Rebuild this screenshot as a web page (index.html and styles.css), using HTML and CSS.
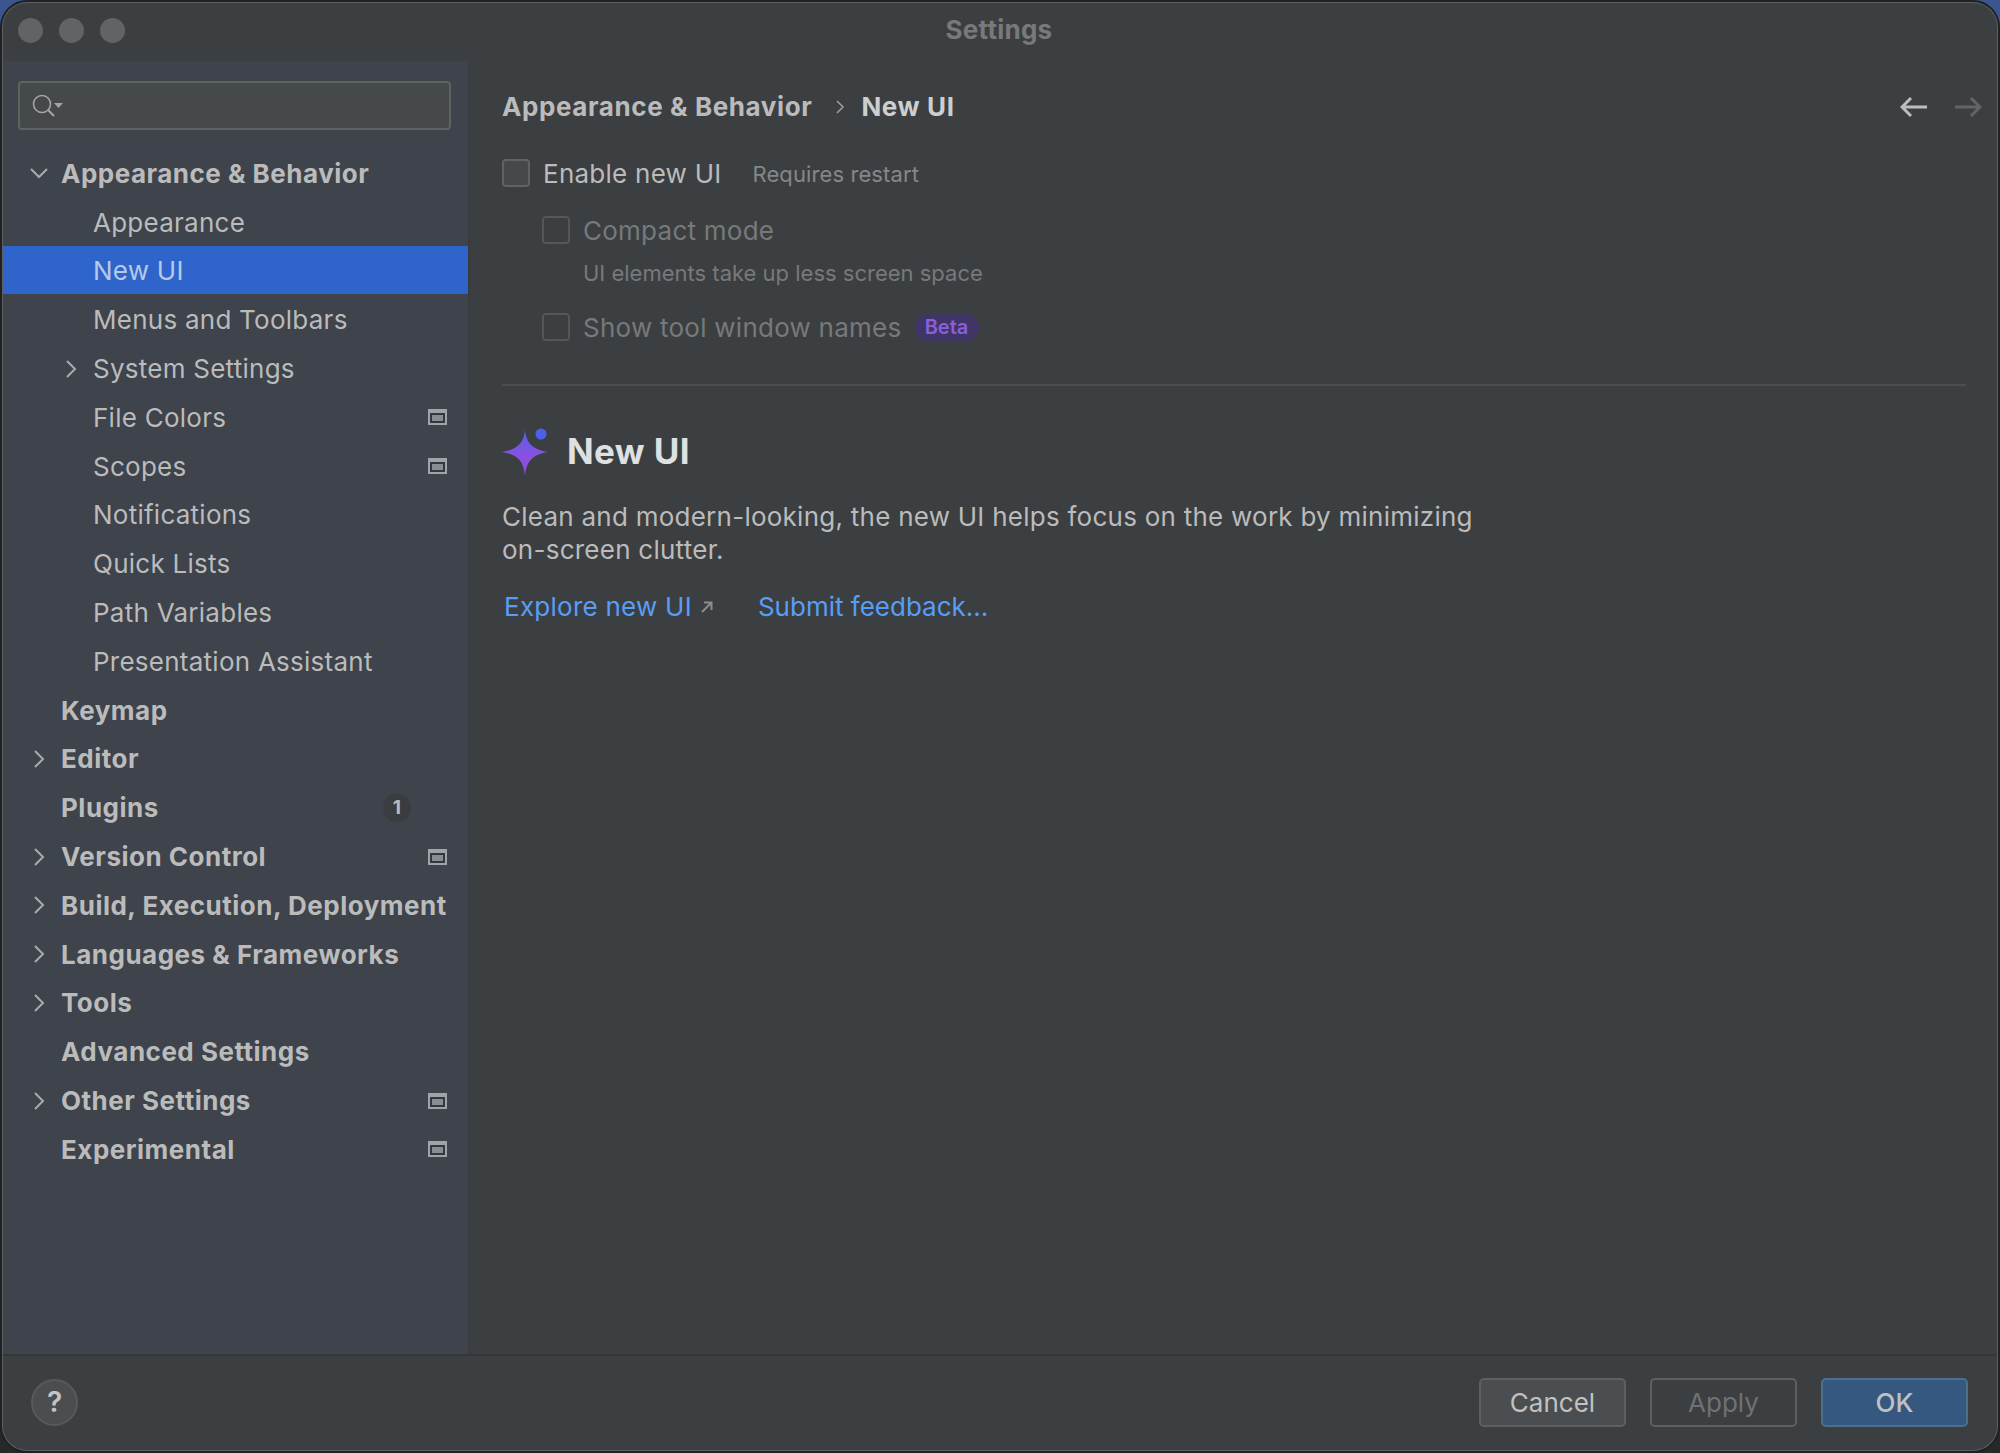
FILE: index.html
```html
<!DOCTYPE html>
<html lang="en">
<head>
  <meta charset="UTF-8">
  <meta name="viewport" content="width=device-width, initial-scale=1.0">
  <title>Settings</title>
  <link rel="stylesheet" href="styles.css">
</head>
<body>
  <div class="window">
    <header class="titlebar">
      <div class="lights">
        <span class="light"></span>
        <span class="light"></span>
        <span class="light"></span>
      </div>
      <div class="title">Settings</div>
    </header>

    <div class="body">
      <aside class="sidebar">
        <div class="search">
          <svg class="search-icon" width="36" height="28" viewBox="0 0 36 28">
            <circle cx="13" cy="12" r="8.5" fill="none" stroke="#a3a5a7" stroke-width="1.6"/>
            <path d="M19 18l6 6" stroke="#a3a5a7" stroke-width="2" fill="none"/>
            <path d="M25 11h9l-4.500 5z" fill="#a3a5a7"/>
          </svg>
        </div>

        <ul class="tree">
          <li class="row top"><svg class="chev" width="32" height="20" viewBox="0 0 32 20"><path d="M2 6l8 8 8-8" /></svg><span>Appearance &amp; Behavior</span></li>
          <li class="row sub"><span class="chev"></span><span>Appearance</span></li>
          <li class="row sub selected"><span class="chev"></span><span>New UI</span></li>
          <li class="row sub"><span class="chev"></span><span>Menus and Toolbars</span></li>
          <li class="row sub"><svg class="chev" width="32" height="20" viewBox="0 0 32 20"><path d="M6 2l8 8-8 8" /></svg><span>System Settings</span></li>
          <li class="row sub"><span class="chev"></span><span>File Colors</span><span class="proj"></span></li>
          <li class="row sub"><span class="chev"></span><span>Scopes</span><span class="proj"></span></li>
          <li class="row sub"><span class="chev"></span><span>Notifications</span></li>
          <li class="row sub"><span class="chev"></span><span>Quick Lists</span></li>
          <li class="row sub"><span class="chev"></span><span>Path Variables</span></li>
          <li class="row sub"><span class="chev"></span><span>Presentation Assistant</span></li>
          <li class="row top"><span class="chev"></span><span>Keymap</span></li>
          <li class="row top"><svg class="chev" width="32" height="20" viewBox="0 0 32 20"><path d="M6 2l8 8-8 8" /></svg><span>Editor</span></li>
          <li class="row top"><span class="chev"></span><span>Plugins</span><span class="count">1</span></li>
          <li class="row top"><svg class="chev" width="32" height="20" viewBox="0 0 32 20"><path d="M6 2l8 8-8 8" /></svg><span>Version Control</span><span class="proj"></span></li>
          <li class="row top"><svg class="chev" width="32" height="20" viewBox="0 0 32 20"><path d="M6 2l8 8-8 8" /></svg><span>Build, Execution, Deployment</span></li>
          <li class="row top"><svg class="chev" width="32" height="20" viewBox="0 0 32 20"><path d="M6 2l8 8-8 8" /></svg><span>Languages &amp; Frameworks</span></li>
          <li class="row top"><svg class="chev" width="32" height="20" viewBox="0 0 32 20"><path d="M6 2l8 8-8 8" /></svg><span>Tools</span></li>
          <li class="row top"><span class="chev"></span><span>Advanced Settings</span></li>
          <li class="row top"><svg class="chev" width="32" height="20" viewBox="0 0 32 20"><path d="M6 2l8 8-8 8" /></svg><span>Other Settings</span><span class="proj"></span></li>
          <li class="row top"><span class="chev"></span><span>Experimental</span><span class="proj"></span></li>
        </ul>
      </aside>

      <main class="content">
        <div class="crumbs">
          <span>Appearance &amp; Behavior</span>
          <svg class="crumb-sep" width="10" height="16" viewBox="0 0 10 16"><path d="M2 2l6 6-6 6" /></svg>
          <span class="crumb-current">New UI</span>
          <div class="nav">
            <svg width="28" height="22" viewBox="0 0 28 22"><path d="M27 11H3M11 2l-9 9 9 9" stroke="#bcbdbe"/></svg>
            <svg width="28" height="22" viewBox="0 0 28 22"><path d="M1 11h24M17 2l9 9-9 9" stroke="#626466"/></svg>
          </div>
        </div>

        <div class="option main-option">
          <span class="box"></span>
          <span>Enable new UI</span>
          <span class="note">Requires restart</span>
        </div>
        <div class="option nested disabled compact">
          <span class="box"></span>
          <span>Compact mode</span>
        </div>
        <div class="hint">UI elements take up less screen space</div>
        <div class="option nested disabled tool-names">
          <span class="box"></span>
          <span>Show tool window names</span>
          <span class="beta">Beta</span>
        </div>

        <hr class="sep">

        <div class="promo-head">
          <svg width="50" height="50" viewBox="0 0 50 50">
            <defs>
              <linearGradient id="star" x1="0" y1="0" x2="0" y2="1">
                <stop offset="0" stop-color="#5560e6"/>
                <stop offset="0.6" stop-color="#8c4fe0"/>
              </linearGradient>
            </defs>
            <path d="M23 4C24.500 16 29 23 46 26 29 29 24.500 36 23 50 21.500 36 17 29 0 26 17 23 21.500 16 23 4z" fill="url(#star)"/>
            <circle cx="39" cy="8" r="5.500" fill="#4a62e8"/>
          </svg>
          <h2>New UI</h2>
        </div>
        <p class="promo-text">Clean and modern-looking, the new UI helps focus on the work by minimizing<br>on-screen clutter.</p>
        <div class="links">
          <a class="link">Explore new UI<svg class="ext" width="14" height="14" viewBox="0 0 14 14"><path d="M2 12L11 3M4 2.500h7.500V10" /></svg></a>
          <a class="link link-tight">Submit feedback...</a>
        </div>
      </main>
    </div>

    <footer class="footer">
      <button class="help">?</button>
      <div class="buttons">
        <button class="btn">Cancel</button>
        <button class="btn btn-off">Apply</button>
        <button class="btn btn-ok">OK</button>
      </div>
    </footer>
  </div>
</body>
</html>
```

FILE: styles.css
```css
* {
  box-sizing: border-box;
}
html, body {
  height: 100%;
}
body {
  margin: 0;
  padding: 3px;
  background: linear-gradient(#3a5590 0, #3a5590 30px, #26282a 30px);
  font-family: Inter, "Noto Sans", sans-serif;
  font-size: 26px;
  letter-spacing: 0.25px;
  color: #bbbbbb;
}
.window {
  height: 1447px;
  display: flex;
  flex-direction: column;
  background: #3c3f41;
  border-radius: 24px;
  box-shadow: 0 0 0 1px #5d6062, 0 0 0 3px #1f2123;
  overflow: hidden;
}

/* title bar */
.titlebar {
  height: 58px;
  flex: none;
  display: flex;
  align-items: center;
  padding: 0 0 3px 15px;
}
.lights {
  display: flex;
  gap: 16px;
}
.light {
  width: 25px;
  height: 25px;
  border-radius: 50%;
  background: #616365;
}
.title {
  flex: 1;
  margin: 0 124px 2px 0;
  text-align: center;
  font-size: 26px;
  font-weight: 700;
  color: #77797b;
}

.body {
  flex: 1;
  min-height: 0;
  display: flex;
}

/* left tree */
.sidebar {
  width: 467px;
  flex: none;
  background: #3e434c;
  border-right: 2px solid #393b3d;
}
.search {
  height: 49px;
  margin: 20px 17px 18px 15px;
  background: #45494a;
  border: 2px solid #5f6263;
  border-radius: 4px;
  display: flex;
  align-items: center;
  padding-left: 9px;
}
.tree {
  list-style: none;
  margin: 0;
  padding: 0;
}
.row {
  height: 48.800px;
  display: flex;
  align-items: center;
  padding: 2px 21px 0 0;
  white-space: nowrap;
}
.row.top {
  padding-left: 26px;
  font-weight: 700;
  letter-spacing: 0.5px;
}
.row.sub {
  padding-left: 58px;
}
.row.selected {
  background: #2f65ca;
  color: #b7c9e8;
}
.chev {
  width: 32px;
  flex: none;
}
svg.chev path {
  fill: none;
  stroke: #a9abad;
  stroke-width: 2;
}
.proj {
  width: 19px;
  height: 16px;
  margin-left: auto;
  border: 2px solid #a0a4aa;
  border-top-width: 4px;
  background: #888c93;
  box-shadow: inset 0 0 0 2px #34373d;
}
.count {
  width: 28px;
  height: 28px;
  margin-left: auto;
  margin-right: 36px;
  border-radius: 50%;
  background: #3a3d40;
  font-size: 19px;
  display: flex;
  align-items: center;
  justify-content: center;
}

/* right side */
.content {
  flex: 1;
  min-width: 0;
  padding: 0 31px 0 32px;
}
.crumbs {
  height: 91px;
  display: flex;
  align-items: center;
  font-weight: 700;
  letter-spacing: 0.6px;
}
.crumb-sep {
  margin: 0 16px 0 23px;
}
.crumb-sep path {
  fill: none;
  stroke: #9a9c9e;
  stroke-width: 1.6;
}
.crumb-current {
  color: #cdcecf;
}
.nav {
  margin-left: auto;
  margin-right: -16px;
  display: flex;
  gap: 26px;
}
.nav path {
  fill: none;
  stroke-width: 3;
}
.option {
  display: flex;
  align-items: center;
}
.main-option {
  height: 40px;
  margin-top: 1px;
}
.box {
  width: 28px;
  height: 28px;
  border: 2px solid #606365;
  border-radius: 4px;
  background: #45494a;
  margin-right: 13px;
  flex: none;
}
.note {
  margin: 2px 0 0 31px;
  font-size: 22px;
  letter-spacing: 0.1px;
  color: #858789;
}
.nested {
  margin-left: 40px;
}
.disabled {
  color: #77797b;
}
.disabled .box {
  background: none;
  border-color: #545658;
}
.compact {
  height: 40px;
  margin-top: 17px;
}
.hint {
  margin: 7px 0 0 81px;
  height: 32px;
  line-height: 32px;
  font-size: 22px;
  letter-spacing: 0;
  color: #77797b;
}
.tool-names {
  height: 40px;
  margin-top: 18px;
}
.beta {
  margin-left: 13px;
  width: 64px;
  text-align: center;
  height: 29px;
  line-height: 28px;
  border-radius: 15px;
  background: #3f3567;
  color: #8b5fd6;
  font-size: 20px;
  font-weight: 600;
  letter-spacing: 0;
}
.sep {
  height: 2px;
  margin: 37px 0 0;
  border: none;
  background: #4c4e50;
}
.promo-head {
  display: flex;
  align-items: center;
  gap: 15px;
  margin-top: 40px;
}
.promo-head h2 {
  margin: 0;
  font-size: 35px;
  font-weight: 700;
  letter-spacing: 0.4px;
  color: #dfe0e1;
}
.promo-text {
  margin: 25px 0 0;
  line-height: 32.500px;
}
.links {
  display: flex;
  gap: 44px;
  margin: 25px 0 0 2px;
}
.link {
  color: #589df6;
  display: flex;
  align-items: center;
}
.link-tight {
  letter-spacing: 0;
}
.ext {
  margin-left: 8px;
}
.ext path {
  fill: none;
  stroke: #8a8c8e;
  stroke-width: 2;
}

/* bottom bar */
.footer {
  height: 96px;
  flex: none;
  border-top: 2px solid #343638;
  display: flex;
  align-items: center;
  justify-content: space-between;
  padding: 0 29px 2px 28px;
}
.help {
  width: 47px;
  height: 47px;
  padding: 0;
  border-radius: 50%;
  border: 2px solid #58595b;
  background: #4b4d4f;
  color: #c3c4c5;
  font: 600 28px Inter, sans-serif;
}
.buttons {
  display: flex;
  gap: 24px;
}
.btn {
  width: 147px;
  height: 49px;
  border: 2px solid #5d5f61;
  border-radius: 5px;
  background: #4b4e50;
  color: #c0c1c2;
  font: 400 26px Inter, sans-serif;
}
.btn-off {
  background: none;
  color: #6f7173;
}
.btn-ok {
  background: #365880;
  border-color: #4c708c;
  font-weight: 500;
}
```
